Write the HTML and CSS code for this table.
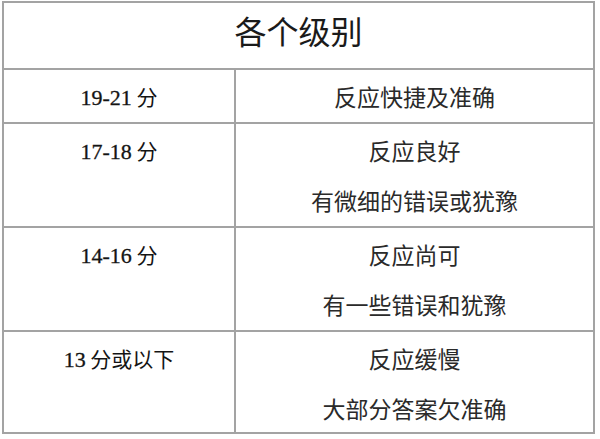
FILE: index.html
```html
<!DOCTYPE html>
<html lang="zh">
<head>
<meta charset="utf-8">
<link rel="stylesheet" href="styles.css">
</head>
<body>
<div class="table">
  <div class="head">各个级别</div>
  <div class="row r1">
    <div class="score"><span class="num">19-21</span> 分</div>
    <div class="desc"><p>反应快捷及准确</p></div>
  </div>
  <div class="row r2">
    <div class="score"><span class="num">17-18</span> 分</div>
    <div class="desc"><p>反应良好</p><p>有微细的错误或犹豫</p></div>
  </div>
  <div class="row r3">
    <div class="score"><span class="num">14-16</span> 分</div>
    <div class="desc"><p>反应尚可</p><p>有一些错误和犹豫</p></div>
  </div>
  <div class="row r4">
    <div class="score"><span class="num">13</span> 分或以下</div>
    <div class="desc"><p>反应缓慢</p><p>大部分答案欠准确</p></div>
  </div>
</div>
</body>
</html>
```
FILE: styles.css
```css
html, body {
  margin: 0;
  padding: 0;
  background: #ffffff;
}
.table {
  box-sizing: border-box;
  width: 593px;
  margin: 1px 0 0 2px;
  border: 2px solid #a3a3a3;
  font-family: "Noto Sans CJK SC", "Noto Sans", sans-serif;
}
.head {
  height: 65px;
  line-height: 54px;
  text-align: center;
  font-size: 32px;
  color: #1a1a1a;
}
.row {
  display: grid;
  grid-template-columns: 232px 1fr;
  border-top: 2px solid #a3a3a3;
}
.r1 { height: 52px; }
.r2 { height: 102px; }
.r3 { height: 102px; }
.r4 { height: 100px; }
.score {
  border-right: 2px solid #a3a3a3;
  text-align: center;
  padding-top: 1px;
  line-height: 50px;
  font-size: 21px;
  color: #141414;
}
.num {
  font-family: "Liberation Serif", serif;
  font-size: 22px;
  -webkit-text-stroke: 0.3px #141414;
}
.desc {
  text-align: center;
  padding-top: 1px;
  font-size: 23px;
  color: #2a2a2a;
}
.desc p {
  margin: 0;
  line-height: 50px;
}
```
